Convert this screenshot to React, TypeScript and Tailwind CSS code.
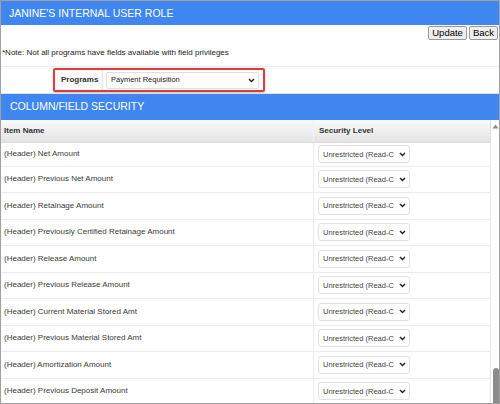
import React from "react";

const items = [
  "(Header) Net Amount",
  "(Header) Previous Net Amount",
  "(Header) Retainage Amount",
  "(Header) Previously Certified Retainage Amount",
  "(Header) Release Amount",
  "(Header) Previous Release Amount",
  "(Header) Current Material Stored Amt",
  "(Header) Previous Material Stored Amt",
  "(Header) Amortization Amount",
  "(Header) Previous Deposit Amount",
];

function Chevron() {
  return (
    <svg width="7" height="5" viewBox="0 0 7 5" className="shrink-0">
      <path d="M1 1 L3.5 3.5 L6 1" fill="none" stroke="#222" strokeWidth="1.4" />
    </svg>
  );
}

export default function App() {
  return (
    <div
      className="w-[500px] h-[404px] border border-[#a0a0a0] overflow-hidden bg-white flex flex-col text-[#333]"
      style={{ fontFamily: '"Liberation Sans", Arial, sans-serif' }}
    >
      <div className="h-[24px] shrink-0 bg-[#3f86f0] text-white text-[10.5px] flex items-center pl-[8px] pt-[1px]">
        JANINE'S INTERNAL USER ROLE
      </div>
      <div className="flex justify-end gap-[2px] pr-[1px] pt-[1px] shrink-0">
        <button className="h-[14px] px-[3px] border border-[#9a9a9a] rounded-[2px] bg-[#efefef] text-[9.5px] leading-none text-black">Update</button>
        <button className="h-[14px] px-[3px] border border-[#9a9a9a] rounded-[2px] bg-[#efefef] text-[9.5px] leading-none text-black">Back</button>
      </div>
      <div className="text-[8px] pl-[1px] pt-[7px] h-[26px] shrink-0 text-[#222]">
        *Note: Not all programs have fields available with field privileges
      </div>
      <div className="h-[1px] bg-[#ececec] shrink-0" />
      <div className="h-[26px] shrink-0 flex items-center">
        <div className="ml-[52px] h-[24px] w-[212px] border-2 border-[#e03a3a] rounded-[2px] flex items-center shadow-[0_1px_2px_rgba(0,0,0,0.25)]">
          <div className="w-[48px] h-full flex items-center pl-[6px] text-[8px] font-bold text-[#333] border-r border-[#e6e6e6] bg-[#fafafa]">
            Programs
          </div>
          <div className="ml-[3px] h-[17px] w-[153px] border border-[#e0e0e0] rounded-[2px] flex items-center justify-between pl-[4px] pr-[3px] text-[7.5px] text-[#222]">
            <span>Payment Requisition</span>
            <Chevron />
          </div>
        </div>
      </div>
      <div className="h-[1px] bg-[#e0e0e0] shrink-0" />
      <div className="h-[26px] shrink-0 bg-[#3f86f0] text-white text-[10.5px] flex items-center pl-[9px]">
        COLUMN/FIELD SECURITY
      </div>
      <div className="flex flex-1 min-h-0">
        <div className="w-[490px] flex flex-col text-[8px]">
          <div className="h-[23px] shrink-0 flex border-b border-[#dcdcdc] bg-gradient-to-b from-[#fafafa] to-[#e4e4e4] font-bold text-[#333]">
            <div className="w-[313px] flex items-center pl-[3px] border-r border-[#f2f2f2]">Item Name</div>
            <div className="flex-1 flex items-center pl-[5px] border-r border-[#dcdcdc]">Security Level</div>
          </div>
          {items.map((t, i) => (
            <div
              key={t}
              className={`${i === 0 ? "h-[23.5px]" : "h-[26.5px]"} shrink-0 flex border-b border-[#ececec] text-[#3a3a3a]`}
            >
              <div className="w-[313px] flex items-center pl-[3px] border-r border-[#ececec]">{t}</div>
              <div className="flex-1 flex items-center pl-[4px] border-r border-[#e4e4e4]">
                <div className="h-[18px] w-[92px] border border-[#e2e2e2] rounded-[3px] flex items-center justify-between pl-[4px] pr-[3px] text-[7.5px] text-[#444] bg-white">
                  <span className="whitespace-nowrap overflow-hidden">Unrestricted (Read-C</span>
                  <Chevron />
                </div>
              </div>
            </div>
          ))}
        </div>
        <div className="w-[8px] flex flex-col items-center relative bg-white">
          <svg width="7" height="5" viewBox="0 0 7 5" className="mt-[4px]">
            <path d="M0.5 4.5 L3.5 0.5 L6.5 4.5 Z" fill="#8a8a8a" />
          </svg>
          <div className="absolute bottom-0 left-[2px] w-[6px] h-[35px] bg-[#8c8c8c] rounded-t-[3px]" />
        </div>
      </div>
    </div>
  );
}
